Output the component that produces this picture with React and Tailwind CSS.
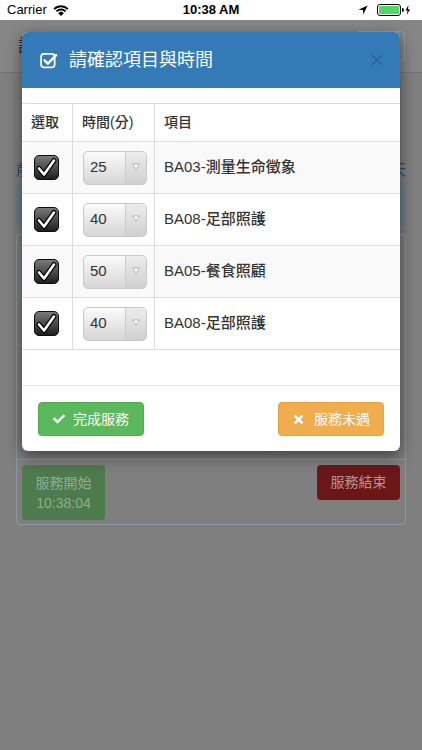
import React from "react";
import { FaCheck, FaTimes } from "react-icons/fa";

const rows = [
  { min: "25", name: "BA03-測量生命徵象" },
  { min: "40", name: "BA08-足部照護" },
  { min: "50", name: "BA05-餐食照顧" },
  { min: "40", name: "BA08-足部照護" },
];

function Wifi() {
  return (
    <svg width="16" height="12" viewBox="0 0 16 12">
      <path d="M8 12 L5.2 9.2 A4 4 0 0 1 10.8 9.2 Z" fill="#000" />
      <path d="M3.4 7.4 A6.5 6.5 0 0 1 12.6 7.4" fill="none" stroke="#000" strokeWidth="1.8" />
      <path d="M1.1 5.1 A9.8 9.8 0 0 1 14.9 5.1" fill="none" stroke="#000" strokeWidth="1.8" />
    </svg>
  );
}

function Battery() {
  return (
    <div className="flex items-center gap-[2px]">
      <svg width="10" height="10" viewBox="0 0 9 9">
        <path d="M8.6 0.4 L0.4 4.2 L4.5 4.5 L4.8 8.6 Z" fill="#000" />
      </svg>
      <svg width="36" height="12" viewBox="0 0 36 12" className="ml-[7px]">
        <rect x="0.5" y="0.5" width="23" height="11" rx="2.5" fill="none" stroke="#000" />
        <rect x="2" y="2" width="20" height="8" rx="1.2" fill="#4cd964" />
        <path d="M25 4 v4 a1.5 1.5 0 0 0 0 -4 Z" fill="#000" />
        <path d="M31.5 1 L28.5 6.6 L30.6 6.6 L29.8 11 L33 5.2 L30.9 5.2 Z" fill="#000" />
      </svg>
    </div>
  );
}

function CheckBox() {
  return (
    <svg width="25" height="25" viewBox="0 0 25 25">
      <defs>
        <linearGradient id="cbg" x1="0" y1="0" x2="0" y2="1">
          <stop offset="0" stopColor="#7c7c7c" />
          <stop offset="1" stopColor="#1c1c1c" />
        </linearGradient>
      </defs>
      <rect x="0.5" y="0.5" width="24" height="24" rx="4.5" fill="url(#cbg)" stroke="#0d0d0d" />
      <path d="M5 13.5 L10 19.5 L20 5.5" fill="none" stroke="#000" strokeWidth="5" strokeLinecap="round" strokeLinejoin="round" />
      <path d="M5 13.5 L10 19.5 L20 5.5" fill="none" stroke="#fff" strokeWidth="2.6" strokeLinecap="round" strokeLinejoin="round" />
    </svg>
  );
}

function Select({ value }) {
  return (
    <div className="flex h-[34px] w-[64px] overflow-hidden rounded-[5px] border border-[#c9c9c9] bg-linear-to-b from-[#fbfbfb] to-[#d6d6d6]">
      <span className="flex flex-1 items-center pl-[6px] text-[15px] text-[#333]">{value}</span>
      <span className="flex w-[21px] justify-center border-l border-[#cdcdcd] bg-linear-to-b from-[#ececec] to-[#d0d0d0] pt-[11px]">
        <svg width="8" height="7" viewBox="0 0 8 7">
          <path d="M0.7 1 L7.3 1 L4 6.2 Z" fill="#fff" stroke="#aaaaaa" strokeWidth="0.8" strokeLinejoin="round" />
        </svg>
      </span>
    </div>
  );
}

export default function App() {
  return (
    <div className="relative h-[750px] w-[422px] overflow-hidden bg-[#7f7f7f] [font-family:'Liberation_Sans','Noto_Sans_CJK_TC',sans-serif]">
      {/* status bar */}
      <div className="grid h-[20px] grid-cols-3 items-center bg-white px-[7px] text-[13px] text-black">
        <div className="flex items-center gap-[6px]">
          <span>Carrier</span>
          <Wifi />
        </div>
        <div className="text-center font-semibold">10:38 AM</div>
        <div className="flex justify-end pr-[2px]">
          <Battery />
        </div>
      </div>

      {/* page behind the dialog */}
      <div className="flex h-[53px] items-center justify-between border-b border-[#747474] bg-[#868686] pl-[18px] pr-[17px]">
        <span className="text-[18px] text-[#2a2a2a]">訪視紀錄</span>
        <div className="h-[30px] w-[50px] rounded-[4px] border border-[#9b9b9b]" />
      </div>
      <div className="px-[16px] pt-[88px]">
        <div className="flex h-[18px] items-center justify-between text-[15px] leading-[18px] text-[#2b4b6b]">
          <span>前一天</span>
          <span>後一天</span>
        </div>
        <div className="mt-[4px] h-[43px] rounded-[4px] bg-[#6d7f88]" />
        <div className="mt-[8px] overflow-hidden rounded-[4px] border border-[#8a999f]">
          <div className="h-[224px]" />
          <div className="flex items-start justify-between border-t border-[#8a999f] px-[5px] pb-[4px] pt-[5px]">
            <div className="flex h-[55px] w-[83px] flex-col items-center justify-center rounded-[4px] bg-[#4d7b4d] text-[14px] leading-[20px] text-[#8fae8f]">
              <span>服務開始</span>
              <span>10:38:04</span>
            </div>
            <div className="flex h-[35px] w-[83px] items-center justify-center rounded-[4px] bg-[#6c1717] text-[14px] text-[#b99393]">
              服務結束
            </div>
          </div>
        </div>
      </div>

      {/* dialog */}
      <div className="absolute left-[22px] top-[32px] w-[378px] overflow-hidden rounded-[6px] bg-white shadow-[0_5px_15px_rgba(0,0,0,0.5)]">
        <div className="flex h-[56px] items-center justify-between bg-[#337ab7] pl-[18px] pr-[17px]">
          <div className="flex items-center gap-[11px]">
            <svg width="18" height="18" viewBox="0 0 16 16">
              <rect x="1" y="2.5" width="12" height="12" rx="2.5" fill="none" stroke="#fff" strokeWidth="1.6" />
              <path d="M4 8.3 L7 11.2 L14.3 3.6" fill="none" stroke="#fff" strokeWidth="2.2" strokeLinecap="round" strokeLinejoin="round" />
            </svg>
            <span className="text-[18px] text-white">請確認項目與時間</span>
          </div>
          <svg width="12" height="12" viewBox="0 0 12 12">
            <path d="M1 1 L11 11 M11 1 L1 11" stroke="#27629a" strokeWidth="1.5" />
          </svg>
        </div>

        <div className="pb-[35px] pt-[15px]">
          <div className="border-t border-[#dddddd] text-[#333]">
            <div className="grid h-[38px] grid-cols-[51px_82px_1fr] border-b border-[#dddddd] text-[14px] font-medium">
              <div className="flex items-center border-r border-[#dddddd] pl-[9px]">選取</div>
              <div className="flex items-center border-r border-[#dddddd] pl-[9px]">時間(分)</div>
              <div className="flex items-center pl-[9px]">項目</div>
            </div>
            {rows.map((r, i) => (
              <div
                key={i}
                className={
                  "grid h-[52px] grid-cols-[51px_82px_1fr] border-b border-[#dddddd] " +
                  (i % 2 === 0 ? "bg-[#f9f9f9]" : "bg-white")
                }
              >
                <div className="flex items-center justify-center border-r border-[#dddddd] pr-[1px]">
                  <CheckBox />
                </div>
                <div className="flex items-center border-r border-[#dddddd] pl-[10px]">
                  <Select value={r.min} />
                </div>
                <div className="flex items-center pl-[9px] text-[15px] font-medium">{r.name}</div>
              </div>
            ))}
          </div>
        </div>

        <div className="flex items-center justify-between border-t border-[#e5e5e5] px-[16px] pb-[15px] pt-[16px]">
          <button className="flex h-[34px] w-[106px] items-center justify-center gap-[8px] rounded-[4px] border border-[#4cae4c] bg-[#5cb85c] text-[14px] text-white">
            <FaCheck size={12} />
            <span>完成服務</span>
          </button>
          <button className="flex h-[34px] w-[106px] items-center justify-center gap-[9px] rounded-[4px] border border-[#eea236] bg-[#f0ad4e] text-[14px] text-white">
            <FaTimes size={13} />
            <span>服務未遇</span>
          </button>
        </div>
      </div>
    </div>
  );
}
